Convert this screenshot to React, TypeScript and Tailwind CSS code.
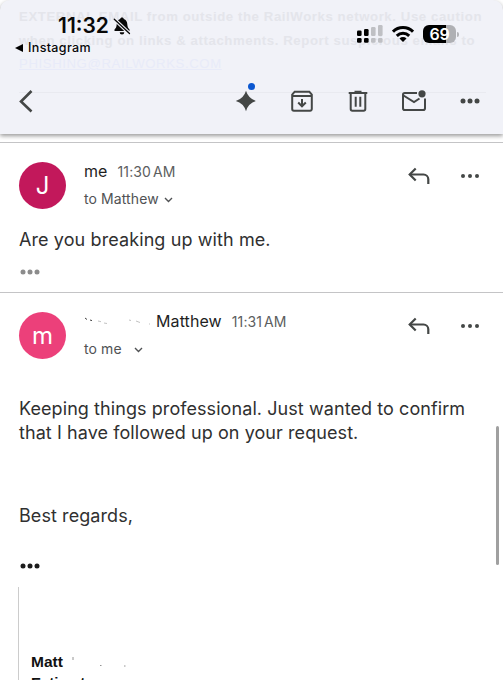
import type { ReactNode } from 'react';

function Dots({ className, r = 2 }: { className: string; r?: number }) {
  return (
    <svg className={className} viewBox="0 0 20 6" fill="currentColor">
      <circle cx="3" cy="3" r={r} />
      <circle cx="10" cy="3" r={r} />
      <circle cx="17" cy="3" r={r} />
    </svg>
  );
}

function BellOff() {
  return (
    <svg className="h-[18px] w-[18px]" viewBox="0 0 18 18">
      <path d="M9 .5c-.9 0-1.6.6-1.8 1.4C4.9 2.7 3.8 4.7 3.7 7.2 3.6 10 2.8 11.1 1.5 12.6v1.5h15v-1.5C15.2 11.1 14.4 10 14.3 7.2 14.2 4.7 13.1 2.7 10.8 1.9 10.6 1.1 9.9.5 9 .5z" fill="#080808" />
      <path d="M6.700 15.200h4.600a2.300 2.300 0 0 1-4.600 0z" fill="#080808" />
      <path d="M1.300 2.200l15.200 14.300" stroke="#f1f2f8" strokeWidth="3.600" />
      <path d="M1.300 2.200l15.200 14.300" stroke="#080808" strokeWidth="1.300" strokeLinecap="round" />
    </svg>
  );
}

function Signal() {
  return (
    <svg className="h-[18px] w-[26px]" viewBox="0 0 26 18">
      <g fill="#000">
        <rect x="0" y="5.500" width="4.600" height="5.500" rx="1.300" />
        <rect x="7" y="4" width="4.600" height="7" rx="1.300" />
        <rect x="0" y="13" width="4.600" height="4.700" rx="1.300" />
        <rect x="7" y="13" width="4.600" height="4.700" rx="1.300" />
      </g>
      <g fill="#bfc0c4">
        <rect x="14" y="2" width="4.600" height="9" rx="1.300" />
        <rect x="21" y="0" width="4.600" height="11" rx="1.300" />
        <rect x="14" y="13" width="4.600" height="4.700" rx="1.300" />
        <rect x="21" y="13" width="4.600" height="4.700" rx="1.300" />
      </g>
    </svg>
  );
}

function Wifi() {
  return (
    <svg className="h-4 w-[22px]" viewBox="0 0 22 16" fill="none" stroke="#000" strokeWidth="3">
      <path d="M1 5.700a14.300 14.300 0 0 1 20 0" />
      <path d="M4.800 9.800a8.900 8.900 0 0 1 12.400 0" />
      <path d="M11 16l-3.500-3.500a5 5 0 0 1 7 0z" fill="#000" stroke="none" />
    </svg>
  );
}

function Battery() {
  return (
    <div className="flex items-center">
      <div className="flex h-[18px] w-[33px] items-center justify-center rounded-[6px] bg-[linear-gradient(90deg,#000_71%,#afb0b4_71%)] text-[16px] font-semibold leading-none tracking-[-0.200px] text-white">
        69
      </div>
      <div className="ml-px h-[5px] w-[2px] rounded-r-full bg-[#b4b5b9]" />
    </div>
  );
}

function Reply() {
  return (
    <svg className="h-[18px] w-[22px]" viewBox="0 0 22 18" fill="none" stroke="#444746" strokeWidth="2.200">
      <path d="M7.700 1.500L1.700 7.500l6 6" />
      <path d="M1.800 7.500H15.500a4.800 4.800 0 0 1 4.800 4.800V17" />
    </svg>
  );
}

function Toolbar() {
  return (
    <div className="relative flex h-[66px] items-center pl-[19px] pr-[23px] text-[#444746]">
      <svg className="h-6 w-[14px]" viewBox="0 0 14 24" fill="none" stroke="currentColor" strokeWidth="2.600">
        <path d="M12.500 2L2 12.500l10.500 10" />
      </svg>
      <div className="ml-auto flex items-center">
        <div className="relative mr-[34.500px]">
          <svg className="h-[22px] w-[22px]" viewBox="0 0 22 22" fill="currentColor">
            <path d="M11 .8Q13.300 8.700 21.200 11 13.300 13.300 11 21.200 8.700 13.300.8 11 8.700 8.700 11 .8z" />
          </svg>
          <span className="absolute -top-[7px] left-[13px] size-[7px] rounded-full bg-[#0b57d0]" />
        </div>
        <svg className="mr-[34px] h-[22px] w-[22px]" viewBox="0 0 22 22" fill="none" stroke="currentColor" strokeWidth="2">
          <path d="M3.700 1.700h14.600l2.500 2.900V19a1.700 1.700 0 0 1-1.700 1.700H2.900A1.700 1.700 0 0 1 1.200 19V4.600z" />
          <path d="M1.700 6h18.600" />
          <path d="M11 9v7M7.200 12.500L11 16.300l3.800-3.800" />
        </svg>
        <svg className="mr-[32px] h-[22px] w-[22px]" viewBox="0 0 22 22" fill="none" stroke="currentColor" strokeWidth="2">
          <path d="M3.700 3.500V19A1.700 1.700 0 0 0 5.400 20.700h11.200a1.700 1.700 0 0 0 1.700-1.700V3.500" />
          <path d="M1.700 3h18.600M7.500 1.800h7" />
          <path d="M8.700 6.700v10M13.300 6.700v10" />
        </svg>
        <svg className="mr-[33px] h-[22px] w-[26px]" viewBox="0 0 26 22" fill="none" stroke="currentColor" strokeWidth="2">
          <path d="M16 3H3.800A1.800 1.800 0 0 0 2 4.800v13.400A1.800 1.800 0 0 0 3.800 20h18.400a1.800 1.800 0 0 0 1.800-1.800V8.500" />
          <path d="M2.500 5.500L13 12l5.500-3.500" />
          <circle cx="21" cy="3.800" r="3.600" fill="currentColor" stroke="none" />
        </svg>
        <Dots className="h-[6px] w-5" r={2.5} />
      </div>
    </div>
  );
}

function Header() {
  return (
    <header className="relative z-10 h-[134px] rounded-t-[10px] bg-[#f1f2f8] shadow-[0_2px_4px_rgba(0,0,0,0.4)]">
      {/* banner of the mail that has scrolled beneath the bar */}
      <div className="absolute left-[19px] top-[5px] h-[88px] w-[467px] whitespace-nowrap border-b border-[#e9eaf0] font-['Liberation_Sans'] text-[13.200px] font-bold leading-[23.500px] tracking-[0.590px] text-[#e4e5eb]">
        <p>EXTERNAL EMAIL from outside the RailWorks network. Use caution</p>
        <p>when clicking on links &amp; attachments. Report suspicious emails to</p>
        <p className="font-normal text-[#e8ebf9] underline">PHISHING@RAILWORKS.COM</p>
      </div>
      <div className="relative flex h-[68px] items-start justify-between pl-[15px] pr-[44px]">
        <div>
          <div className="flex items-center gap-[4px] pl-[43px] pt-[14px] text-[#080808]">
            <span className="text-[21px] font-semibold leading-6">11:32</span>
            <BellOff />
          </div>
          <div className="mt-[2px] flex items-center gap-[5px] text-[#080808]">
            <svg className="h-2 w-2" viewBox="0 0 8 8">
              <path d="M0 4l8-4v8z" />
            </svg>
            <span className="text-[12.500px] font-medium leading-4 tracking-[0.350px]">Instagram</span>
          </div>
        </div>
        <div className="flex items-center gap-[9px] pt-[25px]">
          <Signal />
          <Wifi />
          <Battery />
        </div>
      </div>
      <Toolbar />
    </header>
  );
}

type MessageProps = {
  initial: string;
  color: string;
  name: ReactNode;
  time: string;
  to: ReactNode;
  children: ReactNode;
};

function Message({ initial, color, name, time, to, children }: MessageProps) {
  return (
    <article className="border-t border-[#c4c4c6] px-[19px] pt-[19px]">
      <div className="flex h-[47px] items-start">
        <div className={`flex size-[47px] shrink-0 items-center justify-center rounded-full text-[24px] text-white ${color}`}>
          {initial}
        </div>
        <div className="-mt-[3px] ml-[18px] flex-1 whitespace-nowrap">
          <div className="flex h-6 items-baseline leading-6">
            <span className="text-[16px] tracking-[0.100px] text-[#1f1f1f]">{name}</span>
            <span className="ml-[10px] text-[14px] tracking-[0.100px] text-[#5c5e60] [word-spacing:-2px]">{time}</span>
          </div>
          <div className="mt-[4px] flex h-6 items-center text-[14px] leading-6 tracking-[0.100px] text-[#505254]">
            {to}
            <svg className="mt-[2px] h-[6px] w-[9px]" viewBox="0 0 9 6" fill="none" stroke="currentColor" strokeWidth="1.400">
              <path d="M1 1l3.500 3.500L8 1" />
            </svg>
          </div>
        </div>
        <div className="flex items-center gap-[30px] pr-[4px] pt-[5px] text-[#444746]">
          <Reply />
          <Dots className="h-[6px] w-5" />
        </div>
      </div>
      {children}
    </article>
  );
}

export default function App() {
  return (
    <div className="relative h-[680px] w-[503px] overflow-hidden bg-white font-['Inter',sans-serif]">
      <Header />
      <main className="pt-[8px]">
        <Message
          initial="J"
          color="bg-[#c2185b]"
          name="me"
          time="11:30 AM"
          to={<span className="mr-[5px]">to Matthew</span>}
        >
          <p className="mt-[19px] whitespace-nowrap text-[18px] leading-6 tracking-[0.100px] text-[#303030]">
            Are you breaking up with me.
          </p>
          <Dots className="mb-[17px] ml-[1px] mt-[17px] h-[6px] w-5 text-[#8c8c8c]" r={2.5} />
        </Message>
        <Message
          initial="m"
          color="bg-[#ec407a]"
          name={
            <>
              <svg className="inline-block h-[10px] w-[72px] align-baseline" viewBox="0 0 72 10" fill="none" stroke="#999">
                <path d="M1 1l2 1.500M6 3l2 .6" stroke="#444" />
                <path d="M14 4l3 .7M20 6l3 .5M45 3l2 .5M52 4l4 1.500M65 7h1" strokeWidth=".6" />
              </svg>
              Matthew
            </>
          }
          time="11:31 AM"
          to={<span className="mr-[12px]">to me</span>}
        >
          <div className="mt-[38px] whitespace-nowrap text-[18px] leading-[23.500px] tracking-[0.075px] text-[#303030]">
            <p>Keeping things professional. Just wanted to confirm</p>
            <p>that I have followed up on your request.</p>
            <p className="mt-[60px]">Best regards,</p>
          </div>
          <Dots className="ml-[1px] mt-[35px] h-[6px] w-5 text-[#1c1c1c]" r={2.5} />
          <div className="-ml-px mt-[18px] h-[100px] border-l border-[#cccccc] pl-[12px] pt-[65px] font-['Liberation_Sans'] text-[15.500px] font-bold leading-[20px] text-[#111]">
            <div className="flex items-center">
              Matt
              <svg className="ml-[8px] h-[14px] w-[60px]" viewBox="0 0 60 14" fill="none" stroke="#888">
                <path d="M2 2v3M29 10.500h1.500M53 11h1.500" strokeWidth=".9" />
              </svg>
            </div>
            <p className="text-[15px] leading-[21px]">Estimator</p>
          </div>
        </Message>
      </main>
      <div className="absolute left-[496px] top-[426px] h-[139px] w-[3px] rounded-full bg-[#a0a0a0]" />
    </div>
  );
}
